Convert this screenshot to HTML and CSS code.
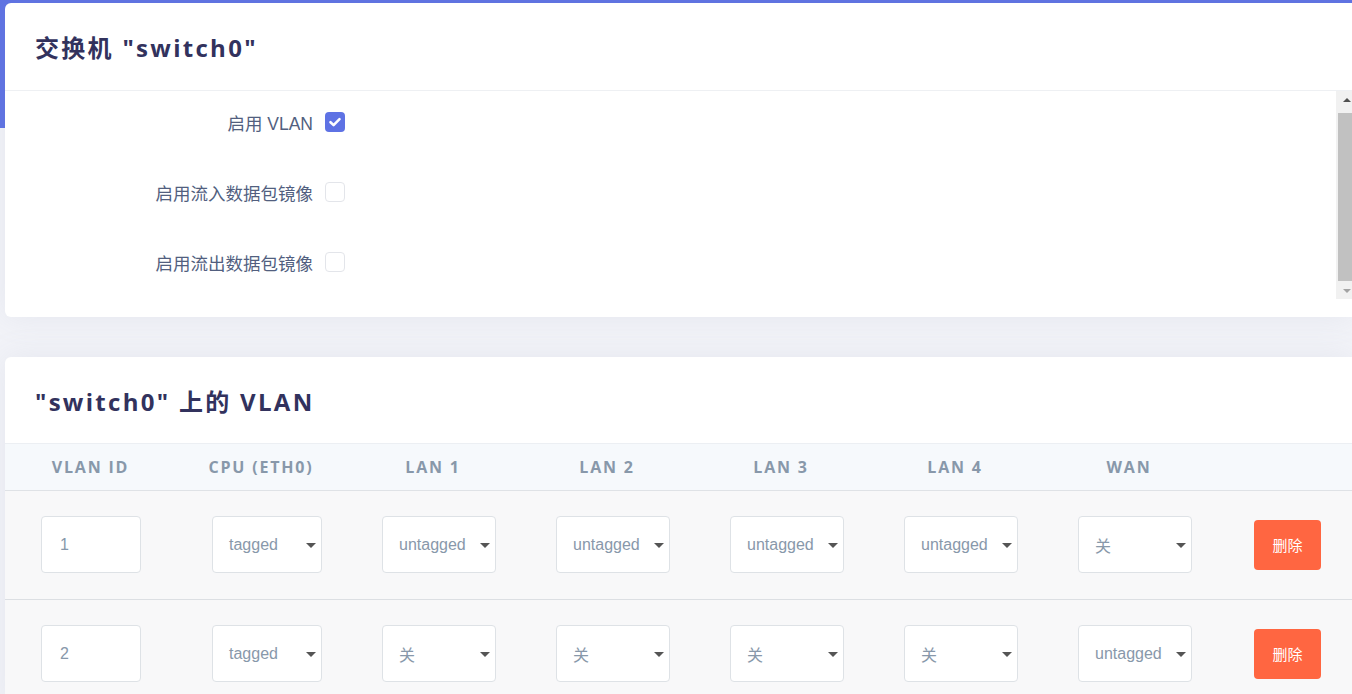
FILE: index.html
```html
<!DOCTYPE html>
<html lang="zh">
<head>
<meta charset="utf-8">
<title>交换机 switch0</title>
<link rel="stylesheet" href="styles.css">
</head>
<body>
<div class="band"></div>
<main class="content">
  <section class="card card-switch">
    <header class="card-header"><h2 class="title">交换机 "switch0"</h2></header>
    <div class="form-body">
      <div class="form-inner">
        <div class="form-row">
          <label class="form-label">启用 VLAN</label>
          <span class="check checked"><svg viewBox="0 0 20 20" width="20" height="20"><path d="M5.5 10.2 L8.6 13.1 L14.5 7.2" fill="none" stroke="#fff" stroke-width="2.6" stroke-linecap="round" stroke-linejoin="round"/></svg></span>
        </div>
        <div class="form-row">
          <label class="form-label">启用流入数据包镜像</label>
          <span class="check"></span>
        </div>
        <div class="form-row">
          <label class="form-label">启用流出数据包镜像</label>
          <span class="check"></span>
        </div>
      </div>
      <div class="scrollbar">
        <div class="sb-btn"><i class="arrow-up"></i></div>
        <div class="sb-track"><div class="sb-thumb"></div></div>
        <div class="sb-btn"><i class="arrow-down"></i></div>
      </div>
    </div>
  </section>

  <section class="card card-vlan">
    <header class="card-header plain"><h2 class="title">"switch0" 上的 VLAN</h2></header>
    <div class="table">
      <div class="thead">
        <div class="th">VLAN ID</div>
        <div class="th">CPU (ETH0)</div>
        <div class="th">LAN 1</div>
        <div class="th">LAN 2</div>
        <div class="th">LAN 3</div>
        <div class="th">LAN 4</div>
        <div class="th">WAN</div>
        <div class="th"></div>
      </div>
      <div class="tr">
        <div class="td"><div class="input">1</div></div>
        <div class="td"><div class="select narrow"><span>tagged</span><i class="caret"></i></div></div>
        <div class="td"><div class="select"><span>untagged</span><i class="caret"></i></div></div>
        <div class="td"><div class="select"><span>untagged</span><i class="caret"></i></div></div>
        <div class="td"><div class="select"><span>untagged</span><i class="caret"></i></div></div>
        <div class="td"><div class="select"><span>untagged</span><i class="caret"></i></div></div>
        <div class="td"><div class="select"><span>关</span><i class="caret"></i></div></div>
        <div class="td td-action"><button class="btn-del">删除</button></div>
      </div>
      <div class="tr">
        <div class="td"><div class="input">2</div></div>
        <div class="td"><div class="select narrow"><span>tagged</span><i class="caret"></i></div></div>
        <div class="td"><div class="select"><span>关</span><i class="caret"></i></div></div>
        <div class="td"><div class="select"><span>关</span><i class="caret"></i></div></div>
        <div class="td"><div class="select"><span>关</span><i class="caret"></i></div></div>
        <div class="td"><div class="select"><span>关</span><i class="caret"></i></div></div>
        <div class="td"><div class="select"><span>untagged</span><i class="caret"></i></div></div>
        <div class="td td-action"><button class="btn-del">删除</button></div>
      </div>
    </div>
  </section>
</main>
</body>
</html>
```

FILE: styles.css
```css
* { box-sizing: border-box; }
html, body { margin: 0; padding: 0; }
body {
  background: #f2f3f8;
  font-family: "Liberation Sans", "Noto Sans CJK SC", sans-serif;
  overflow: hidden;
  height: 694px;
}
.band {
  height: 128px;
  background: #5e72e4;
}
.content {
  margin-top: -125px;
  padding-left: 5px;
}
.card {
  background: #fff;
  border-radius: 6px 0 0 6px;
  box-shadow: 0 0 2rem 0 rgba(136, 152, 170, 0.12);
}
.card-switch {
  padding-bottom: 18px;
}
.card-header {
  height: 88px;
  border-bottom: 1px solid #eef0f3;
  display: flex;
  align-items: center;
  padding-left: 30px;
}
.card-header.plain {
  height: 86px;
  border-bottom: none;
}
.title {
  margin: 0;
  font-family: "Open Sans", "Noto Sans CJK SC", sans-serif;
  font-weight: 700;
  font-size: 24px;
  letter-spacing: 2.3px;
  color: #32325d;
}
.form-body {
  height: 208px;
  overflow: hidden;
  display: flex;
}
.form-inner {
  flex: 1;
}
.form-row {
  height: 70px;
  padding-bottom: 8px;
  display: flex;
  align-items: center;
}
.form-label {
  width: 320px;
  text-align: right;
  padding-right: 12px;
  font-size: 17.5px;
  color: #525f7f;
}
.check {
  width: 20px;
  height: 20px;
  border: 1px solid #e3e5ea;
  border-radius: 4px;
  background: #fff;
  display: block;
}
.check.checked {
  border: none;
  background: #5e72e4;
}
.check svg { display: block; }

.scrollbar {
  width: 16px;
  background: #f1f1f1;
  display: flex;
  flex-direction: column;
}
.sb-btn {
  height: 17px;
  display: flex;
  align-items: center;
  justify-content: flex-end;
  padding-right: 1px;
}
.arrow-up, .arrow-down {
  width: 0;
  height: 0;
  border-left: 4px solid transparent;
  border-right: 4px solid transparent;
}
.arrow-up { border-bottom: 4px solid #505050; }
.arrow-down { border-top: 4px solid #a3a3a3; }
.sb-track {
  flex: 1;
  padding: 5px 0 1px 2px;
}
.sb-thumb {
  height: 100%;
  background: #c1c1c1;
}

.card-vlan {
  margin-top: 40px;
}
.thead, .tr {
  display: grid;
  grid-template-columns: 171px 170px 174px 174px 174px 174px 174px 1fr;
}
.thead {
  height: 48px;
  background: #f6f9fc;
  border-top: 1px solid #eceff3;
  border-bottom: 1px solid #dfe2e6;
  align-items: center;
}
.th {
  text-align: center;
  font-family: "Open Sans", sans-serif;
  font-weight: 700;
  font-size: 16px;
  letter-spacing: 1.8px;
  color: #8898aa;
  text-transform: uppercase;
}
.tr {
  height: 109px;
  background: #f8f8f9;
  border-bottom: 1px solid #dcdfe3;
  align-items: center;
  padding-bottom: 1px;
}
.td {
  padding-left: 36px;
  display: flex;
  align-items: center;
}
.td-action { padding-left: 38px; }
.input, .select {
  height: 57px;
  background: #fff;
  border: 1px solid #dee2e6;
  border-radius: 4px;
  display: flex;
  align-items: center;
  font-size: 16px;
  color: #8898aa;
}
.input {
  width: 100px;
  padding-left: 18px;
}
.select {
  width: 114px;
  padding-left: 16px;
  position: relative;
}
.select.narrow { width: 110px; }
.caret {
  position: absolute;
  right: 5px;
  top: 26px;
  width: 0;
  height: 0;
  border-left: 5px solid transparent;
  border-right: 5px solid transparent;
  border-top: 5px solid #555;
}
.btn-del {
  width: 67px;
  height: 50px;
  border: none;
  border-radius: 4px;
  background: #ff6641;
  color: #fff;
  font-family: "Noto Sans CJK SC", sans-serif;
  font-size: 15px;
  padding: 0;
}
```
